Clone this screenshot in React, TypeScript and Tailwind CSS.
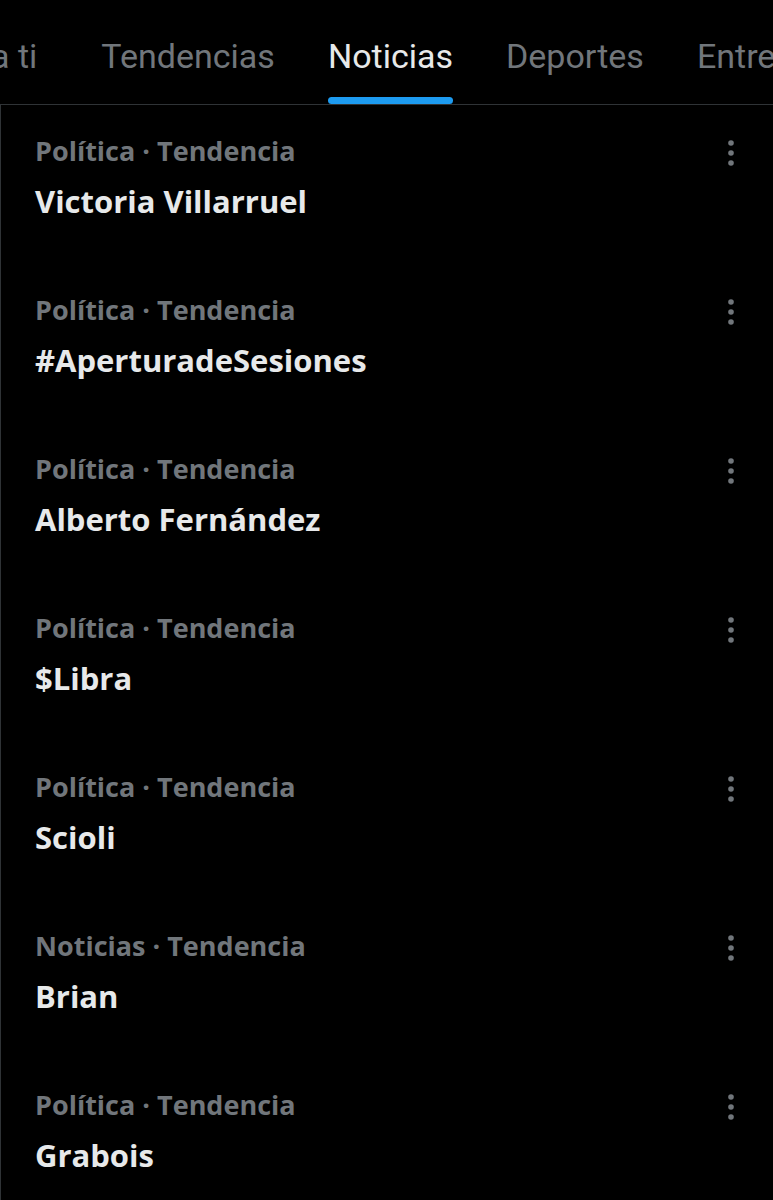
const tabs = ["a ti", "Tendencias", "Noticias", "Deportes", "Entretenimiento"];

const trends = [
  { cat: "Política", name: "Victoria Villarruel" },
  { cat: "Política", name: "#AperturadeSesiones" },
  { cat: "Política", name: "Alberto Fernández" },
  { cat: "Política", name: "$Libra" },
  { cat: "Política", name: "Scioli" },
  { cat: "Noticias", name: "Brian" },
  { cat: "Política", name: "Grabois" },
];

function Dots() {
  return (
    <svg width="10" height="30" viewBox="0 0 10 30" className="text-[#71767b]">
      <circle cx="5" cy="5" r="2.8" fill="currentColor" />
      <circle cx="5" cy="15" r="2.8" fill="currentColor" />
      <circle cx="5" cy="25" r="2.8" fill="currentColor" />
    </svg>
  );
}

export default function App() {
  return (
    <div className="w-[773px] h-[1200px] overflow-hidden bg-black">
      {/* Tabs */}
      <div className="h-[105px] border-b border-[#2f3336] flex items-end overflow-hidden">
        <div className="flex gap-[53px] ml-[-9px] whitespace-nowrap font-['Roboto',sans-serif] text-[34px]">
          {tabs.map((t) => {
            const active = t === "Noticias";
            return (
              <div key={t} className={`flex flex-col items-center ${t === "a ti" ? "mr-[11px]" : ""}`}>
                <span className={`h-[70px] pt-[30px] leading-[40px] ${active ? "text-[#e7e9ea]" : "text-[#71767b]"}`}>
                  {t}
                </span>
                <div className={`h-[7px] w-full rounded-full mt-[21px] ${active ? "bg-[#1d9bf0]" : "bg-transparent"}`} />
              </div>
            );
          })}
        </div>
      </div>

      {/* Trend list */}
      <div className="border-l border-[#2f3336] font-['Open_Sans',sans-serif]">
        {trends.map((tr) => (
          <div key={tr.name} className="h-[159px] flex justify-between pl-[34px] pr-[37px] pt-[28px]">
            <div className="flex flex-col">
              <span className="text-[#71767b] text-[27px] font-bold leading-[36px]">
                {tr.cat} · Tendencia
              </span>
              <span className="text-[#e7e9ea] text-[31px] font-bold leading-[40px] mt-[12px]">
                {tr.name}
              </span>
            </div>
            <div className="pt-[5px]">
              <Dots />
            </div>
          </div>
        ))}
      </div>
    </div>
  );
}
